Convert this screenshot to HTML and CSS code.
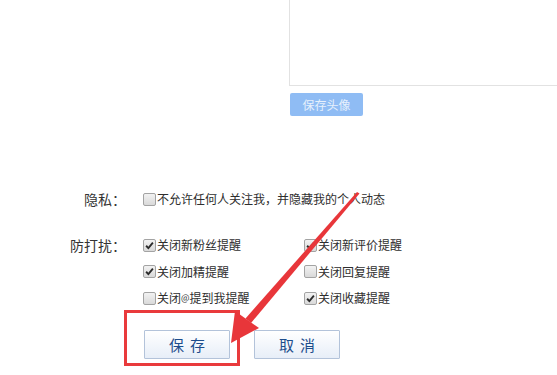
FILE: index.html
```html
<!DOCTYPE html>
<html>
<head>
<meta charset="utf-8">
<link rel="stylesheet" href="styles.css">
</head>
<body>
<div class="avatar-box"></div>
<div class="avatar-btn">保存头像</div>

<div class="form">
  <div class="row">
    <div class="label">隐私：</div>
    <div class="opts single">
      <label class="opt"><span class="box"></span>不允许任何人关注我，并隐藏我的个人动态</label>
    </div>
  </div>
  <div class="row dnd">
    <div class="label">防打扰：</div>
    <div class="opts grid">
      <label class="opt"><span class="box"><svg viewBox="0 0 13 13" class="tick"><path d="M2.5 6.8 L5.2 9.6 L10.5 3.2" /></svg></span>关闭新粉丝提醒</label>
      <label class="opt"><span class="box"><svg viewBox="0 0 13 13" class="tick"><path d="M2.5 6.8 L5.2 9.6 L10.5 3.2" /></svg></span>关闭新评价提醒</label>
      <label class="opt"><span class="box"><svg viewBox="0 0 13 13" class="tick"><path d="M2.5 6.8 L5.2 9.6 L10.5 3.2" /></svg></span>关闭加精提醒</label>
      <label class="opt"><span class="box"></span>关闭回复提醒</label>
      <label class="opt"><span class="box"></span>关闭<span class="at">@</span>提到我提醒</label>
      <label class="opt"><span class="box"><svg viewBox="0 0 13 13" class="tick"><path d="M2.5 6.8 L5.2 9.6 L10.5 3.2" /></svg></span>关闭收藏提醒</label>
    </div>
  </div>
  <div class="actions">
    <button class="btn">保存</button>
    <button class="btn">取消</button>
  </div>
</div>

<div class="highlight"></div>
<svg class="arrow" width="557" height="375" viewBox="0 0 557 375">
  <polygon points="357,192 359.5,193.5 251,323 245.5,318.5" />
  <polygon points="231,343 235,311 259,328" />
</svg>
</body>
</html>
```
FILE: styles.css
```css
html, body {
  margin: 0;
  padding: 0;
  background: #ffffff;
}
body {
  font-family: "Noto Sans CJK SC", "Noto Sans", sans-serif;
  font-size: 12px;
  color: #2e2e2e;
  width: 557px;
  height: 375px;
  overflow: hidden;
  position: relative;
}
.avatar-box {
  margin-left: 289px;
  height: 85px;
  border-left: 1px solid #e2e2e2;
  border-bottom: 1px solid #e2e2e2;
}
.avatar-btn {
  margin: 7px 0 0 290px;
  width: 73px;
  height: 23px;
  line-height: 23px;
  background: #8fbcf4;
  color: #e6f0fc;
  border-radius: 2px;
  text-align: center;
  font-size: 12px;
}
.form {
  margin-top: 73px;
}
.row {
  display: flex;
  align-items: flex-start;
}
.label {
  width: 126px;
  padding-right: 17px;
  text-align: right;
  font-size: 14px;
  line-height: 20px;
  color: #333;
}
.dnd {
  margin-top: 26px;
}
.grid {
  display: grid;
  grid-template-columns: 161px 161px;
  row-gap: 6.5px;
}
.opt {
  display: flex;
  align-items: center;
  height: 20px;
  line-height: 20px;
  white-space: nowrap;
}
.at {
  font-size: 9px;
  letter-spacing: -1px;
  margin-right: 1px;
}
.box {
  width: 13px;
  height: 13px;
  box-sizing: border-box;
  border: 1px solid #a3a3a3;
  border-radius: 2px;
  background: linear-gradient(#f2f2f2, #d9d9d9);
  margin-right: 1px;
  flex: none;
  display: flex;
}
.tick {
  width: 11px;
  height: 11px;
}
.tick path {
  fill: none;
  stroke: #2b2b2b;
  stroke-width: 2.2;
}
.actions {
  display: flex;
  gap: 24px;
  margin: 22px 0 0 144px;
}
.btn {
  width: 86px;
  height: 29px;
  border: 1px solid #b3c3da;
  background: linear-gradient(#ffffff, #e7eef8);
  color: #1d4d8c;
  font-family: "Noto Sans CJK SC", sans-serif;
  font-size: 15px;
  letter-spacing: 6px;
  padding: 0 0 0 6px;
  border-radius: 1px;
}
.highlight {
  position: absolute;
  left: 124px;
  top: 310px;
  width: 116px;
  height: 56px;
  box-sizing: border-box;
  border: 3px solid #e93a3c;
}
.arrow {
  position: absolute;
  left: 0;
  top: 0;
  pointer-events: none;
}
.arrow polygon {
  fill: #e8363a;
}
```
